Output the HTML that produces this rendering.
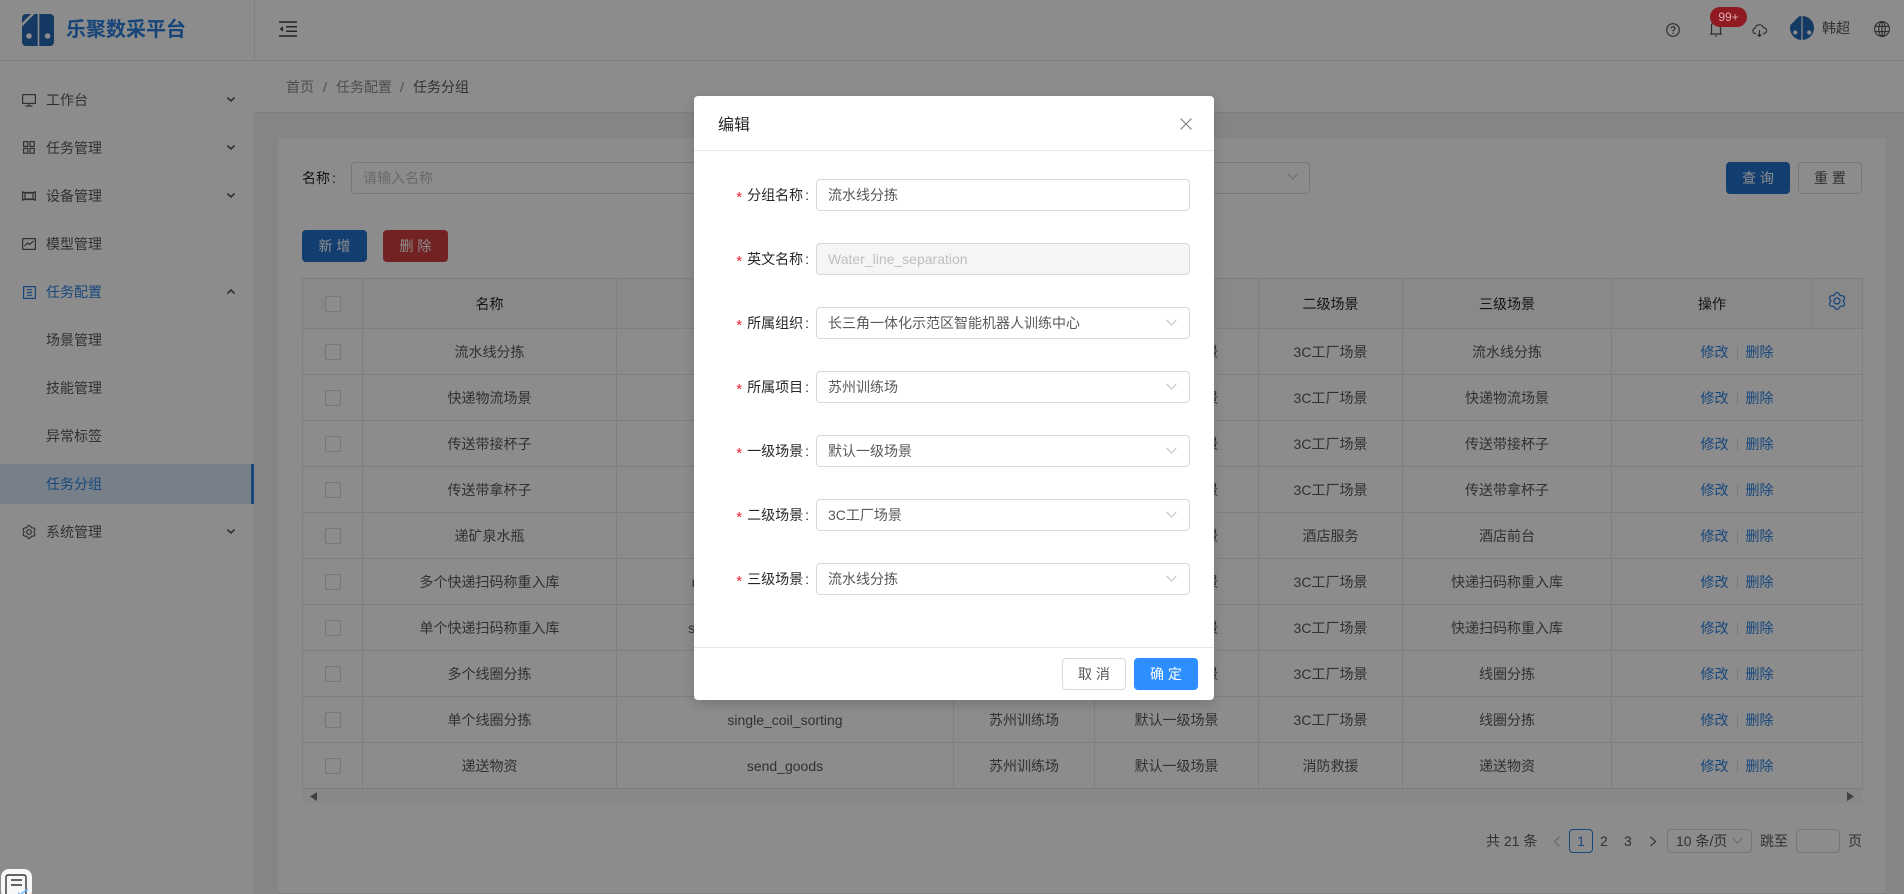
<!DOCTYPE html>
<html lang="zh-CN">
<head>
<meta charset="utf-8">
<title>任务分组</title>
<style>
*{box-sizing:border-box;margin:0;padding:0}
html,body{width:1904px;height:894px;overflow:hidden;background:#f0f2f5}
body{font-family:"Liberation Sans","Noto Sans CJK SC",sans-serif;font-size:14px;color:#595959;position:relative}
.a{position:absolute}
.t{position:absolute;line-height:20px;white-space:nowrap}
#side{left:0;top:0;width:254px;height:894px;background:#fff}
#logo-line{left:0;top:60px;width:254px;height:1px;background:#e8e8e8}
#top{left:254px;top:0;width:1650px;height:61px;background:#fff;border-bottom:1px solid #ececec;border-left:1px solid #e8e8e8}
#crumb{left:254px;top:61px;width:1650px;height:52px;background:#fff;border-bottom:1px solid #e4e6ea}
#card{left:278px;top:138px;width:1608px;height:756px;background:#fff;border-bottom:1px solid #e8e8e8}
.m{position:absolute;left:46px;height:20px;line-height:20px;white-space:nowrap;color:#595959}
.blue{color:#2b82e4}
.ic{position:absolute;fill:none;stroke:#595959;stroke-width:1.2}
.box{position:absolute;border:1px solid #d9d9d9;border-radius:4px;background:#fff;height:32px}
.btn{position:absolute;height:32px;border-radius:4px;text-align:center;line-height:32px;white-space:nowrap}
table{position:absolute;left:302px;top:278px;width:1560px;table-layout:fixed;border-collapse:collapse;text-align:center;color:#595959}
td,th{border:1px solid #e8e8e8;height:46px;padding:0;font-weight:400;white-space:nowrap;overflow:hidden}
th{height:50px;background:#fafafa;color:rgba(0,0,0,.85)}
.cb{display:block;width:16px;height:16px;border:1px solid #d9d9d9;border-radius:2px;margin:0 auto;background:#fff}
.lk{color:#2b82e4}
.sep{display:inline-block;width:1px;height:13px;background:#e0e0e0;margin:0 8px;vertical-align:-2px}
#mask{left:0;top:0;width:1904px;height:894px;background:rgba(0,0,0,.45)}
#modal{left:694px;top:96px;width:520px;height:604px;background:#fff;border-radius:4px;box-shadow:0 4px 12px rgba(0,0,0,.15)}
.lab{position:absolute;left:0;width:115px;text-align:right;line-height:20px;color:rgba(0,0,0,.85);white-space:nowrap}
.lab i{font-style:normal;color:#f5222d;font-family:"Liberation Sans",sans-serif;font-size:15px;margin-right:5px;position:relative;top:2px}
.c{margin-left:2px}
.inp{position:absolute;left:122px;width:374px;height:32px;border:1px solid #d9d9d9;border-radius:4px;padding-left:11px;line-height:30px;color:#595959;background:#fff;white-space:nowrap}
.inp svg{position:absolute;right:12px;top:11px;fill:none;stroke:#bfbfbf;stroke-width:1}
</style>
</head>
<body>
<div class="a" id="side"></div>
<div class="a" id="logo-line"></div>
<div class="a" id="top"></div>
<div class="a" id="crumb"></div>
<div class="a" id="card"></div>

<!-- logo -->
<svg class="a" style="left:22px;top:14px" width="32" height="32" viewBox="0 0 32 32" fill="#2569b2">
<path d="M9 0 L0 9 V4 A4 4 0 0 1 4 0 Z"/>
<path d="M12.500 0 H15.700 V32 H4 A4 4 0 0 1 0 28 V12.500 Z"/>
<path d="M17.300 0 H28 A4 4 0 0 1 32 4 V28 A4 4 0 0 1 28 32 H17.300 Z"/>
<circle cx="7" cy="22" r="2.800" fill="#fff"/><circle cx="25.600" cy="22" r="2.800" fill="#fff"/>
</svg>
<div class="t" style="left:66px;top:16px;font-size:20px;line-height:28px;font-weight:700;color:#2a7fdd">乐聚数采平台</div>

<!-- sidebar -->
<svg class="ic" style="left:22px;top:93px" width="14" height="14" viewBox="0 0 14 14"><rect x=".6" y="1.6" width="12.8" height="8.8"/><path d="M7 10.500V13M3.500 13h7"/></svg>
<div class="m" style="top:90px">工作台</div>
<svg class="ic" style="left:226px;top:96px;stroke-width:1.6" width="10" height="8" viewBox="0 0 10 8"><path d="M1.500 1.500L5 5l3.500-3.500"/></svg>

<svg class="ic" style="left:23px;top:141px" width="12" height="13" viewBox="0 0 12 13"><rect x=".6" y=".6" width="4.2" height="4.8"/><rect x="7" y=".6" width="4.2" height="4.8"/><rect x=".6" y="7.4" width="4.2" height="4.8"/><rect x="7" y="7.4" width="4.2" height="4.8"/></svg>
<div class="m" style="top:138px">任务管理</div>
<svg class="ic" style="left:226px;top:144px;stroke-width:1.6" width="10" height="8" viewBox="0 0 10 8"><path d="M1.500 1.500L5 5l3.500-3.500"/></svg>

<svg class="ic" style="left:22px;top:190px" width="14" height="12" viewBox="0 0 14 12"><path d="M.6 1v10M13.400 1v10M.6 2.500h12.800M.6 9.500h12.800"/><rect x="3" y="3" width="8" height="6"/></svg>
<div class="m" style="top:186px">设备管理</div>
<svg class="ic" style="left:226px;top:192px;stroke-width:1.6" width="10" height="8" viewBox="0 0 10 8"><path d="M1.500 1.500L5 5l3.500-3.500"/></svg>

<svg class="ic" style="left:22px;top:238px" width="14" height="12" viewBox="0 0 14 12"><rect x=".6" y=".6" width="12.8" height="10.8"/><path d="M2.500 8L5.500 5l2 1.500 4-3.500"/></svg>
<div class="m" style="top:234px">模型管理</div>

<svg class="ic" style="left:23px;top:286px;stroke:#2b82e4" width="13" height="13" viewBox="0 0 13 13"><rect x=".6" y=".6" width="11.8" height="11.8"/><path d="M4 3.700h5M4 6.500h5M4 9.300h5"/></svg>
<div class="m blue" style="top:282px">任务配置</div>
<svg class="ic" style="left:226px;top:288px;stroke-width:1.6" width="10" height="8" viewBox="0 0 10 8"><path d="M1.500 5.500L5 2l3.500 3.500"/></svg>

<div class="m" style="top:330px">场景管理</div>
<div class="m" style="top:378px">技能管理</div>
<div class="m" style="top:426px">异常标签</div>
<div class="a" style="left:0;top:464px;width:254px;height:40px;background:#d9e8f7;border-right:3px solid #2b82e4"></div>
<div class="m blue" style="top:474px">任务分组</div>

<svg class="ic" style="left:22px;top:525px;stroke-width:1.5;stroke-linejoin:round" width="14" height="14" viewBox="0 0 18 18"><path d="M12.100 3.630Q9-2.500 5.900 3.630Q-.96 3.250 2.800 9Q-.96 14.750 5.900 14.370Q9 20.500 12.100 14.370Q18.960 14.750 15.200 9Q18.960 3.250 12.100 3.630Z"/><circle cx="9" cy="9" r="3"/></svg>
<div class="m" style="top:522px">系统管理</div>
<svg class="ic" style="left:226px;top:528px;stroke-width:1.6" width="10" height="8" viewBox="0 0 10 8"><path d="M1.500 1.500L5 5l3.500-3.500"/></svg>

<!-- header -->
<svg class="ic" style="left:279px;top:21px;stroke:#444;stroke-width:1.5" width="18" height="16" viewBox="0 0 18 16"><path d="M0 1h18M7 5.700h11M7 10.300h11M0 15h18"/><path d="M4 5.200v5.600L.6 8z" fill="#444" stroke="none"/></svg>
<svg class="ic" style="left:1666px;top:23px;stroke:#555" width="14" height="14" viewBox="0 0 14 14"><circle cx="7" cy="7" r="6.3"/><path d="M5.200 5.400C5.200 3 8.900 3.200 8.900 5.400 8.900 6.800 7 6.800 7 8.400M7 9.600v1.200"/></svg>
<svg class="ic" style="left:1710px;top:22px;stroke:#555" width="12" height="15" viewBox="0 0 12 15"><path d="M1.500 12V3.500Q1.500 1 4 1h4q2.500 0 2.500 2.500V12M0 12h12M5 14h2"/></svg>
<svg class="ic" style="left:1752px;top:24px;stroke:#555" width="15" height="13" viewBox="0 0 15 13"><path d="M4 9.600H3.200a2.700 2.700 0 0 1-.2-5.300A4.400 4.400 0 0 1 11.400 3.600a3 3 0 0 1 .4 6H11M7.500 6v6.500M5.600 10.600l1.900 1.900 1.900-1.900"/></svg>
<svg class="a" style="left:1790px;top:16px" width="24" height="24" viewBox="0 0 32 32">
<defs><clipPath id="cc"><circle cx="16" cy="16" r="16"/></clipPath></defs>
<g clip-path="url(#cc)" fill="#2569b2"><path d="M9 0 L0 9 V0 Z"/><path d="M12.500 0 H15.200 V32 H0 V12.500 Z"/><path d="M16.800 0 H32 V32 H16.800 Z"/></g>
<circle cx="7" cy="22" r="2.800" fill="#fff"/><circle cx="25.600" cy="22" r="2.800" fill="#fff"/></svg>
<div class="t" style="left:1822px;top:18px;color:#595959">韩超</div>
<svg class="ic" style="left:1874px;top:21px;stroke:#444;stroke-width:1" width="16" height="16" viewBox="0 0 16 16"><circle cx="8" cy="8" r="7.400"/><ellipse cx="8" cy="8" rx="3.200" ry="7.400"/><path d="M8 .6v14.800M.8 5.400h14.400M.8 10.600h14.400"/></svg>

<!-- breadcrumb -->
<div class="t" style="left:286px;top:77px;color:#8c8c8c">首页</div>
<div class="t" style="left:323px;top:77px;color:#8c8c8c">/</div>
<div class="t" style="left:336px;top:77px;color:#8c8c8c">任务配置</div>
<div class="t" style="left:400px;top:77px;color:#8c8c8c">/</div>
<div class="t" style="left:413px;top:77px;color:#595959">任务分组</div>

<!-- filter -->
<div class="t" style="left:302px;top:168px;color:rgba(0,0,0,.85)">名称<span class="c">:</span></div>
<div class="box" style="left:351px;top:162px;width:400px;padding-left:11px;line-height:30px;color:#bfbfbf">请输入名称</div>
<div class="box" style="left:1100px;top:162px;width:210px"></div>
<svg class="ic" style="left:1287px;top:173px;stroke:#bfbfbf;stroke-width:1" width="11" height="8" viewBox="0 0 11 8"><path d="M.7 1l4.800 5.200L10.300 1"/></svg>
<div class="btn" style="left:1726px;top:162px;width:64px;background:#2472cc;color:#fff">查 询</div>
<div class="btn" style="left:1798px;top:162px;width:64px;background:#fff;border:1px solid #d9d9d9;color:#595959;line-height:30px">重 置</div>
<div class="btn" style="left:302px;top:230px;width:65px;background:#2472cc;color:#fff">新 增</div>
<div class="btn" style="left:383px;top:230px;width:65px;background:#cf3e41;color:#fff">删 除</div>

<!-- table -->
<table>
<colgroup><col style="width:60px"><col style="width:254px"><col style="width:337px"><col style="width:141px"><col style="width:164px"><col style="width:144px"><col style="width:209px"><col style="width:201px"><col style="width:50px"></colgroup>
<tr><th><span class="cb"></span></th><th>名称</th><th>英文名称</th><th>所属项目</th><th>一级场景</th><th>二级场景</th><th>三级场景</th><th>操作</th><th></th></tr>
<tr><td><span class="cb"></span></td><td>流水线分拣</td><td>Water_line_separation</td><td>苏州训练场</td><td>默认一级场景</td><td>3C工厂场景</td><td>流水线分拣</td><td colspan="2"><span class="lk">修改</span><span class="sep"></span><span class="lk">删除</span></td></tr>
<tr><td><span class="cb"></span></td><td>快递物流场景</td><td>express_logistics</td><td>苏州训练场</td><td>默认一级场景</td><td>3C工厂场景</td><td>快递物流场景</td><td colspan="2"><span class="lk">修改</span><span class="sep"></span><span class="lk">删除</span></td></tr>
<tr><td><span class="cb"></span></td><td>传送带接杯子</td><td>conveyor_cup</td><td>苏州训练场</td><td>默认一级场景</td><td>3C工厂场景</td><td>传送带接杯子</td><td colspan="2"><span class="lk">修改</span><span class="sep"></span><span class="lk">删除</span></td></tr>
<tr><td><span class="cb"></span></td><td>传送带拿杯子</td><td>conveyor_take_cup</td><td>苏州训练场</td><td>默认一级场景</td><td>3C工厂场景</td><td>传送带拿杯子</td><td colspan="2"><span class="lk">修改</span><span class="sep"></span><span class="lk">删除</span></td></tr>
<tr><td><span class="cb"></span></td><td>递矿泉水瓶</td><td>pass_water</td><td>苏州训练场</td><td>默认一级场景</td><td>酒店服务</td><td>酒店前台</td><td colspan="2"><span class="lk">修改</span><span class="sep"></span><span class="lk">删除</span></td></tr>
<tr><td><span class="cb"></span></td><td>多个快递扫码称重入库</td><td>multi_express_scan_weighing</td><td>苏州训练场</td><td>默认一级场景</td><td>3C工厂场景</td><td>快递扫码称重入库</td><td colspan="2"><span class="lk">修改</span><span class="sep"></span><span class="lk">删除</span></td></tr>
<tr><td><span class="cb"></span></td><td>单个快递扫码称重入库</td><td>single_express_scan_weighing</td><td>苏州训练场</td><td>默认一级场景</td><td>3C工厂场景</td><td>快递扫码称重入库</td><td colspan="2"><span class="lk">修改</span><span class="sep"></span><span class="lk">删除</span></td></tr>
<tr><td><span class="cb"></span></td><td>多个线圈分拣</td><td>multiple_coil_sorting</td><td>苏州训练场</td><td>默认一级场景</td><td>3C工厂场景</td><td>线圈分拣</td><td colspan="2"><span class="lk">修改</span><span class="sep"></span><span class="lk">删除</span></td></tr>
<tr><td><span class="cb"></span></td><td>单个线圈分拣</td><td>single_coil_sorting</td><td>苏州训练场</td><td>默认一级场景</td><td>3C工厂场景</td><td>线圈分拣</td><td colspan="2"><span class="lk">修改</span><span class="sep"></span><span class="lk">删除</span></td></tr>
<tr><td><span class="cb"></span></td><td>递送物资</td><td>send_goods</td><td>苏州训练场</td><td>默认一级场景</td><td>消防救援</td><td>递送物资</td><td colspan="2"><span class="lk">修改</span><span class="sep"></span><span class="lk">删除</span></td></tr>
</table>
<svg class="ic" style="left:1828px;top:292px;stroke:#2b82e4;stroke-width:1.3;stroke-linejoin:round" width="18" height="18" viewBox="0 0 18 18"><path d="M12.100 3.630Q9-2.500 5.900 3.630Q-.96 3.250 2.800 9Q-.96 14.750 5.900 14.370Q9 20.500 12.100 14.370Q18.960 14.750 15.200 9Q18.960 3.250 12.100 3.630Z"/><circle cx="9" cy="9" r="3"/></svg>
<!-- scrollbar -->
<div class="a" style="left:302px;top:789px;width:1560px;height:15px;background:#f7f7f7"></div>
<svg class="a" style="left:309px;top:792px" width="9" height="9" viewBox="0 0 9 9"><path d="M8 0v9L1 4.500z" fill="#777"/></svg>
<svg class="a" style="left:1846px;top:792px" width="9" height="9" viewBox="0 0 9 9"><path d="M1 0v9L8 4.500z" fill="#777"/></svg>

<!-- pagination -->
<div class="t" style="left:1486px;top:831px;color:#595959">共 21 条</div>
<svg class="ic" style="left:1553px;top:836px;stroke:#bfbfbf" width="8" height="11" viewBox="0 0 8 11"><path d="M6.500.8L1.500 5.500l5 4.700"/></svg>
<div class="a" style="left:1569px;top:829px;width:24px;height:24px;border:1px solid #2b82e4;border-radius:4px;background:#fff;text-align:center;line-height:22px;color:#2b82e4">1</div>
<div class="t" style="left:1600px;top:831px">2</div>
<div class="t" style="left:1624px;top:831px">3</div>
<svg class="ic" style="left:1649px;top:836px;stroke:#595959" width="8" height="11" viewBox="0 0 8 11"><path d="M1.500.8l5 4.700-5 4.700"/></svg>
<div class="a" style="left:1667px;top:829px;width:85px;height:24px;border:1px solid #d9d9d9;border-radius:4px;background:#fff;padding-left:8px;line-height:22px;white-space:nowrap">10 条/页</div>
<svg class="ic" style="left:1732px;top:837px;stroke:#bfbfbf;stroke-width:1" width="11" height="8" viewBox="0 0 11 8"><path d="M.7 1l4.800 5.200L10.300 1"/></svg>
<div class="t" style="left:1760px;top:831px">跳至</div>
<div class="a" style="left:1796px;top:829px;width:44px;height:24px;border:1px solid #d9d9d9;border-radius:4px;background:#fff"></div>
<div class="t" style="left:1848px;top:831px">页</div>

<div class="a" id="mask"></div>

<!-- badge above mask -->
<div class="a" style="left:1710px;top:7px;width:37px;height:20px;border-radius:10px;background:#8f1a21;color:#dbb0b3;font-size:12px;line-height:20px;text-align:center">99+</div>

<!-- modal -->
<div class="a" id="modal">
  <div class="t" style="left:24px;top:18px;font-size:16px;line-height:24px;color:rgba(0,0,0,.85)">编辑</div>
  <svg class="a" style="left:486px;top:22px;fill:none;stroke:#777;stroke-width:1" width="12" height="12" viewBox="0 0 12 12"><path d="M.5.5l11 11M11.500.5l-11 11"/></svg>
  <div class="a" style="left:0;top:54px;width:520px;height:1px;background:#e8e8e8"></div>

  <div class="lab" style="top:89px"><i>*</i>分组名称<span class="c">:</span></div>
  <div class="inp" style="top:83px">流水线分拣</div>
  <div class="lab" style="top:153px"><i>*</i>英文名称<span class="c">:</span></div>
  <div class="inp" style="top:147px;background:#f5f5f5;color:#bfbfbf">Water_line_separation</div>
  <div class="lab" style="top:217px"><i>*</i>所属组织<span class="c">:</span></div>
  <div class="inp" style="top:211px">长三角一体化示范区智能机器人训练中心<svg width="11" height="8" viewBox="0 0 11 8"><path d="M.7 1l4.800 5.200L10.300 1"/></svg></div>
  <div class="lab" style="top:281px"><i>*</i>所属项目<span class="c">:</span></div>
  <div class="inp" style="top:275px">苏州训练场<svg width="11" height="8" viewBox="0 0 11 8"><path d="M.7 1l4.800 5.200L10.300 1"/></svg></div>
  <div class="lab" style="top:345px"><i>*</i>一级场景<span class="c">:</span></div>
  <div class="inp" style="top:339px">默认一级场景<svg width="11" height="8" viewBox="0 0 11 8"><path d="M.7 1l4.800 5.200L10.300 1"/></svg></div>
  <div class="lab" style="top:409px"><i>*</i>二级场景<span class="c">:</span></div>
  <div class="inp" style="top:403px">3C工厂场景<svg width="11" height="8" viewBox="0 0 11 8"><path d="M.7 1l4.800 5.200L10.300 1"/></svg></div>
  <div class="lab" style="top:473px"><i>*</i>三级场景<span class="c">:</span></div>
  <div class="inp" style="top:467px">流水线分拣<svg width="11" height="8" viewBox="0 0 11 8"><path d="M.7 1l4.800 5.200L10.300 1"/></svg></div>

  <div class="a" style="left:0;top:551px;width:520px;height:1px;background:#e8e8e8"></div>
  <div class="btn" style="left:368px;top:562px;width:64px;border:1px solid #d9d9d9;background:#fff;color:#595959;line-height:30px">取 消</div>
  <div class="btn" style="left:440px;top:562px;width:64px;background:#2d8fff;color:#fff">确 定</div>
</div>

<!-- floating widget -->
<div class="a" style="left:1px;top:869px;width:31px;height:30px;background:#f7f7f7;border-radius:8px"></div>
<svg class="a" style="left:5px;top:874px" width="26" height="20" viewBox="0 0 26 20"><path d="M21 20V3a2 2 0 0 0-2-2H3a2 2 0 0 0-2 2v17" fill="none" stroke="#333" stroke-width="1.4"/><path d="M6 6h11M6 11h11" fill="none" stroke="#333" stroke-width="1.4"/><path d="M13 19l2 1M16 20l7-5" fill="none" stroke="#6fb6ff" stroke-width="1.4"/></svg>
</body>
</html>
